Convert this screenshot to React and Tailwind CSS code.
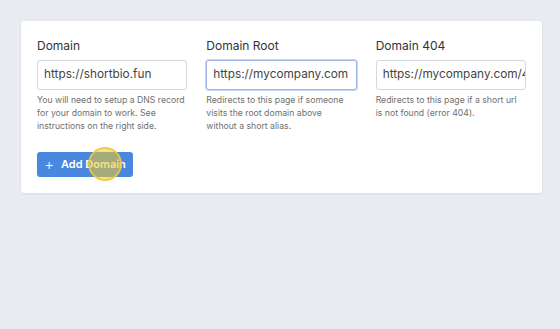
export default function App() {
  const cols = [
    { label: "Domain", value: "https://shortbio.fun", help: ["You will need to setup a DNS record", "for your domain to work. See", "instructions on the right side."], focus: false },
    { label: "Domain Root", value: "https://mycompany.com", help: ["Redirects to this page if someone", "visits the root domain above", "without a short alias."], focus: true },
    { label: "Domain 404", value: "https://mycompany.com/404", help: ["Redirects to this page if a short url", "is not found (error 404)."], focus: false },
  ];
  return (
    <div className="w-[560px] h-[329px] bg-[#e8ebf0] pt-[21px] pl-[21px] overflow-hidden" style={{ fontFamily: "Inter, 'Noto Sans', sans-serif" }}>
      <div className="w-[521px] bg-white rounded-[3px] shadow-[0_1px_3px_rgba(0,0,0,0.08)] px-4 pt-[17px] pb-[16px]">
        <div className="grid grid-cols-3 gap-x-[19px]">
          {cols.map((c) => (
            <div key={c.label} className="flex flex-col">
              <div className="text-[12px] leading-[16px] text-[#333]">{c.label}</div>
              <div className={`mt-[6px] h-[30px] rounded-[3px] border ${c.focus ? "border-[#9fb6e6] ring-1 ring-[#c6d4f2]" : "border-[#d6d8dc]"} flex items-center pl-[6px] overflow-hidden`}>
                <span className="text-[11.8px] text-[#444] whitespace-nowrap">{c.value}</span>
              </div>
              <div className="mt-[4px] text-[8.7px] leading-[13px] text-[#707070] flex flex-col">
                {c.help.map((l) => (
                  <span key={l} className="whitespace-nowrap">{l}</span>
                ))}
              </div>
            </div>
          ))}
        </div>
        <div className="relative mt-[19px] w-[96px] h-[25px] rounded-[3px] bg-[#4a87de] flex items-center justify-center gap-[7px] text-white text-[11px] font-semibold">
          <span className="text-[15px] font-light leading-none">+</span>
          <span>Add Domain</span>
          <div className="absolute left-[51px] top-[-5px] w-[34px] h-[34px] rounded-full bg-[rgba(240,200,40,0.55)] border-2 border-[rgba(240,200,60,0.8)]"></div>
        </div>
      </div>
    </div>
  );
}
